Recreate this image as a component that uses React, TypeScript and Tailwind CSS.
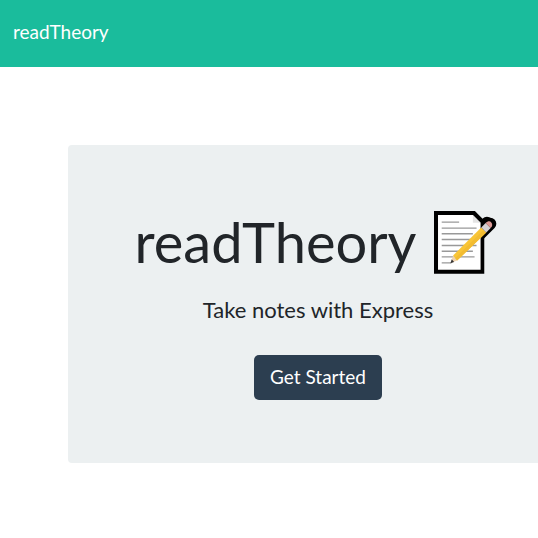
function MemoIcon() {
  return (
    <svg viewBox="42 33 188 188" className="h-[63px] w-[63px] shrink-0" role="img" aria-label="Memo">
      <path d="M42 33H164L192 61V220H42Z" fill="#000" />
      <path d="M200 68L178 90M210 71L180 101" stroke="#000" strokeWidth="36" strokeLinecap="round" />
      <path d="M54 45H158L181 68V208H54Z" fill="#fff" />
      <path d="M158 46V68H181Z" fill="#e4e4e4" />
      <path
        d="M65 66H117M65 84H169M65 101H158M65 118H152M65 136H169M65 153H158M65 170H163M65 188H94"
        stroke="#999"
        strokeWidth="4"
      />
      <path d="M92 188L99 166L111 181Z" fill="#f0d2ae" />
      <path d="M91 189L95 177L102 185Z" fill="#333" />
      <path d="M99 166L183 82L198 97L111 181Z" fill="#f9c536" />
      <path d="M105 174L190 89L198 97L111 181Z" fill="#f2bc32" />
      <path d="M183 82L196 69L211 84L198 97Z" fill="#d5d0d3" />
      <path d="M196 69C202 63 209 62 213 67C217 72 217 78 211 84Z" fill="#dc9a96" />
    </svg>
  );
}

export default function App() {
  return (
    <div className="min-h-screen bg-white font-[Lato,sans-serif] text-[#212529]">
      <nav className="flex h-[67px] items-center bg-[#1abc9c] px-[13px] pb-1">
        <a href="#" className="text-[19px] leading-8 text-white">
          readTheory
        </a>
      </nav>
      <main className="pt-[78px] pl-[68px]">
        <section className="flex flex-col items-center rounded-l bg-[#ecf0f1] pt-[61px] pr-8 pb-[63px] pl-[62px]">
          <div className="flex items-center gap-[18px] pr-1">
            <h1 className="text-[56px] leading-[72px]">readTheory</h1>
            <MemoIcon />
          </div>
          <p className="mt-[14px] text-[22px] leading-9">Take notes with Express</p>
          <button
            type="button"
            className="mt-[27px] h-[45px] rounded-[5px] bg-[#2c3e50] px-4 text-[19px] text-white"
          >
            Get Started
          </button>
        </section>
      </main>
    </div>
  );
}
